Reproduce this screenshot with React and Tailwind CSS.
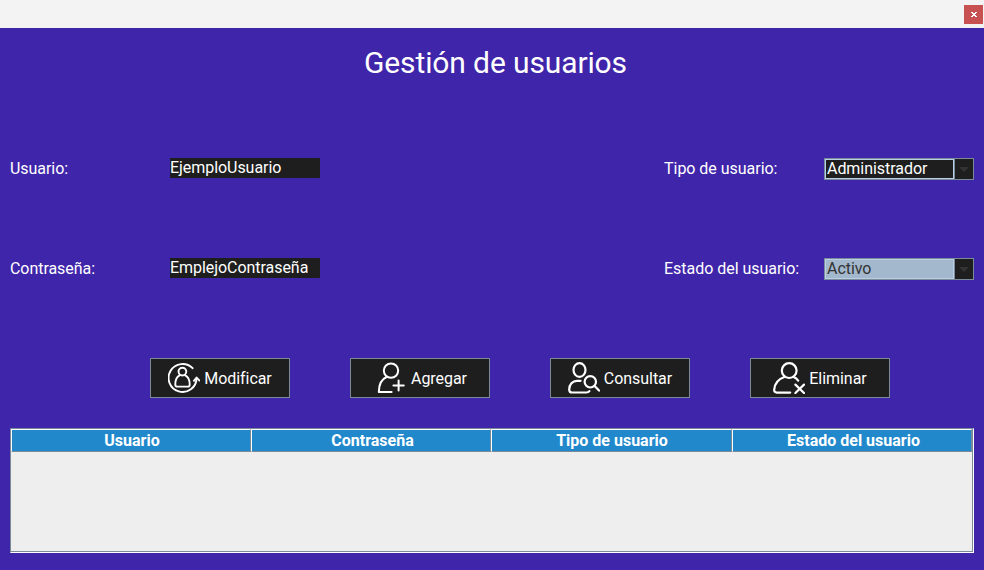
const icons = {
  modify: (
    <>
      <path d="M24.6 6.2A14 14 0 1 0 28.6 16.4" />
      <path d="M25.9 18.8L28.6 15.6L31.5 18.6" />
      <circle cx="14.4" cy="9.6" r="3.9" />
      <path d="M11.6 13.4C8.8 14.8 7.3 18.2 7.3 22.4C7.3 24 7.8 24.6 9.2 24.6H19.8C21.2 24.6 21.7 24 21.7 22.4C21.7 18.2 20 14.8 17.2 13.4" />
    </>
  ),
  add: (
    <>
      <circle cx="16" cy="8.6" r="7.2" />
      <path d="M11.6 15C7 17 3.9 22 3.8 30H16.6" />
      <path d="M23.6 18.4V28.6M18.4 23.5H28.8" />
    </>
  ),
  search: (
    <>
      <ellipse cx="11.5" cy="8" rx="6" ry="6.9" />
      <path d="M12.6 18.8H9C4.6 18.8 1.2 22.4 1.2 27.4C1.2 29.6 2.2 30.5 4.2 30.5H18.4C20 30.5 20.8 30 21.4 29.2" />
      <circle cx="22.3" cy="19.8" r="5.7" />
      <path d="M26.6 24L31 28.6" />
    </>
  ),
  remove: (
    <>
      <circle cx="16.2" cy="8.6" r="7.4" />
      <path d="M11.4 15C5.4 17 1.8 21.6 1.2 27.6C1 29.6 2 30.6 3.8 30.6H17.2" />
      <path d="M20.6 15C22.6 15.8 24 17 25.2 18.6" />
      <path d="M22.4 22.6L31 31M31 22.6L22.4 31" />
    </>
  ),
};

const strokes = { modify: 1.9, add: 2, search: 2.2, remove: 2.2 };

function ActionButton({ icon, label, nudge = "" }) {
  return (
    <button
      className={`flex h-10 w-[140px] items-center justify-center gap-1 border border-[#7a8a99] bg-[#1e1e1e] text-white ${nudge}`}
    >
      <svg
        className="size-8 shrink-0"
        viewBox="0 0 32 32"
        fill="none"
        stroke="white"
        strokeWidth={strokes[icon]}
        strokeLinecap="round"
        strokeLinejoin="round"
      >
        {icons[icon]}
      </svg>
      <span className="pt-0.5">{label}</span>
    </button>
  );
}

function TextField({ label, value }) {
  return (
    <div className="flex h-[22px]">
      <span className="w-40 leading-[22px]">{label}</span>
      <div className="h-5 w-[150px] bg-[#1e1e1e] leading-5">{value}</div>
    </div>
  );
}

function Combo({ label, value, selected }) {
  return (
    <div className="flex h-[22px]">
      <span className="w-40 leading-[22px] tracking-[-0.03px]">{label}</span>
      <div className="flex h-[22px] w-[150px] border border-[#7a8a99] bg-[#1e1e1e]">
        <div
          className={`h-5 w-[129px] border border-[#b8cfe5] pl-px leading-[18px] ${
            selected ? "bg-[#a3b8cc] text-[#333333]" : "text-white"
          }`}
        >
          {value}
        </div>
        <div className="flex flex-1 items-start justify-center border-l border-[#7a8a99] pt-2">
          <svg className="h-[5px] w-[10px] shrink-0" viewBox="0 0 10 5">
            <path d="M0 0H10L5 5Z" fill="#333333" />
          </svg>
        </div>
      </div>
    </div>
  );
}

function HeaderCell({ width, children }) {
  return (
    <div
      className={`h-[23px] border border-t-white border-r-[#7a8a99] border-b-[#7a8a99] border-l-white bg-[#2288cc] text-center leading-[21px] font-bold tracking-normal ${width}`}
    >
      {children}
    </div>
  );
}

export default function App() {
  return (
    <div className="flex h-[570px] w-[984px] flex-col overflow-hidden bg-[#3f25a9] font-['Roboto',sans-serif] text-base tracking-[-0.05px] text-white">
      <header className="flex h-7 shrink-0 justify-end bg-[#f3f3f3] pt-[5px] pr-px">
        <button className="flex h-[19px] w-[19px] items-center justify-center bg-[#c75050]">
          <svg className="h-[5px] w-[6px]" viewBox="0 0 6 5" fill="white" shapeRendering="crispEdges">
            <path d="M0 0H2V1H0ZM4 0H6V1H4ZM1 1H5V2H1ZM2 2H4V3H2ZM1 3H5V4H1ZM0 4H2V5H0ZM4 4H6V5H4Z" />
          </svg>
        </button>
      </header>
      <h1 className="mt-[10px] h-[50px] pl-[7px] text-center text-[30px] leading-[50px] tracking-[-0.12px]">
        Gestión de usuarios
      </h1>
      <main className="mt-[70px] flex justify-between px-[10px]">
        <div className="flex flex-col gap-[78px]">
          <TextField label="Usuario:" value="EjemploUsuario" />
          <TextField label="Contraseña:" value="EmplejoContraseña" />
        </div>
        <div className="flex flex-col gap-[78px]">
          <Combo label="Tipo de usuario:" value="Administrador" />
          <Combo label="Estado del usuario:" value="Activo" selected />
        </div>
      </main>
      <div className="mt-[78px] flex gap-[60px] pl-[150px]">
        <ActionButton icon="modify" label="Modificar" />
        <ActionButton icon="add" label="Agregar" nudge="pl-0.5" />
        <ActionButton icon="search" label="Consultar" />
        <ActionButton icon="remove" label="Eliminar" />
      </div>
      <section className="mt-[30px] ml-[10px] h-[125px] w-[964px] border border-t-[#7a8a99] border-r-white border-b-white border-l-[#7a8a99]">
        <div className="h-full border-r border-b border-[#7a8a99] bg-[#eeeeee]">
          <div className="flex">
            <HeaderCell width="w-[240px] pl-0.5">Usuario</HeaderCell>
            <HeaderCell width="w-[240px] pl-[3px]">Contraseña</HeaderCell>
            <HeaderCell width="w-[241px] pl-px">Tipo de usuario</HeaderCell>
            <HeaderCell width="w-[240px] pl-[3px]">Estado del usuario</HeaderCell>
          </div>
        </div>
      </section>
    </div>
  );
}
